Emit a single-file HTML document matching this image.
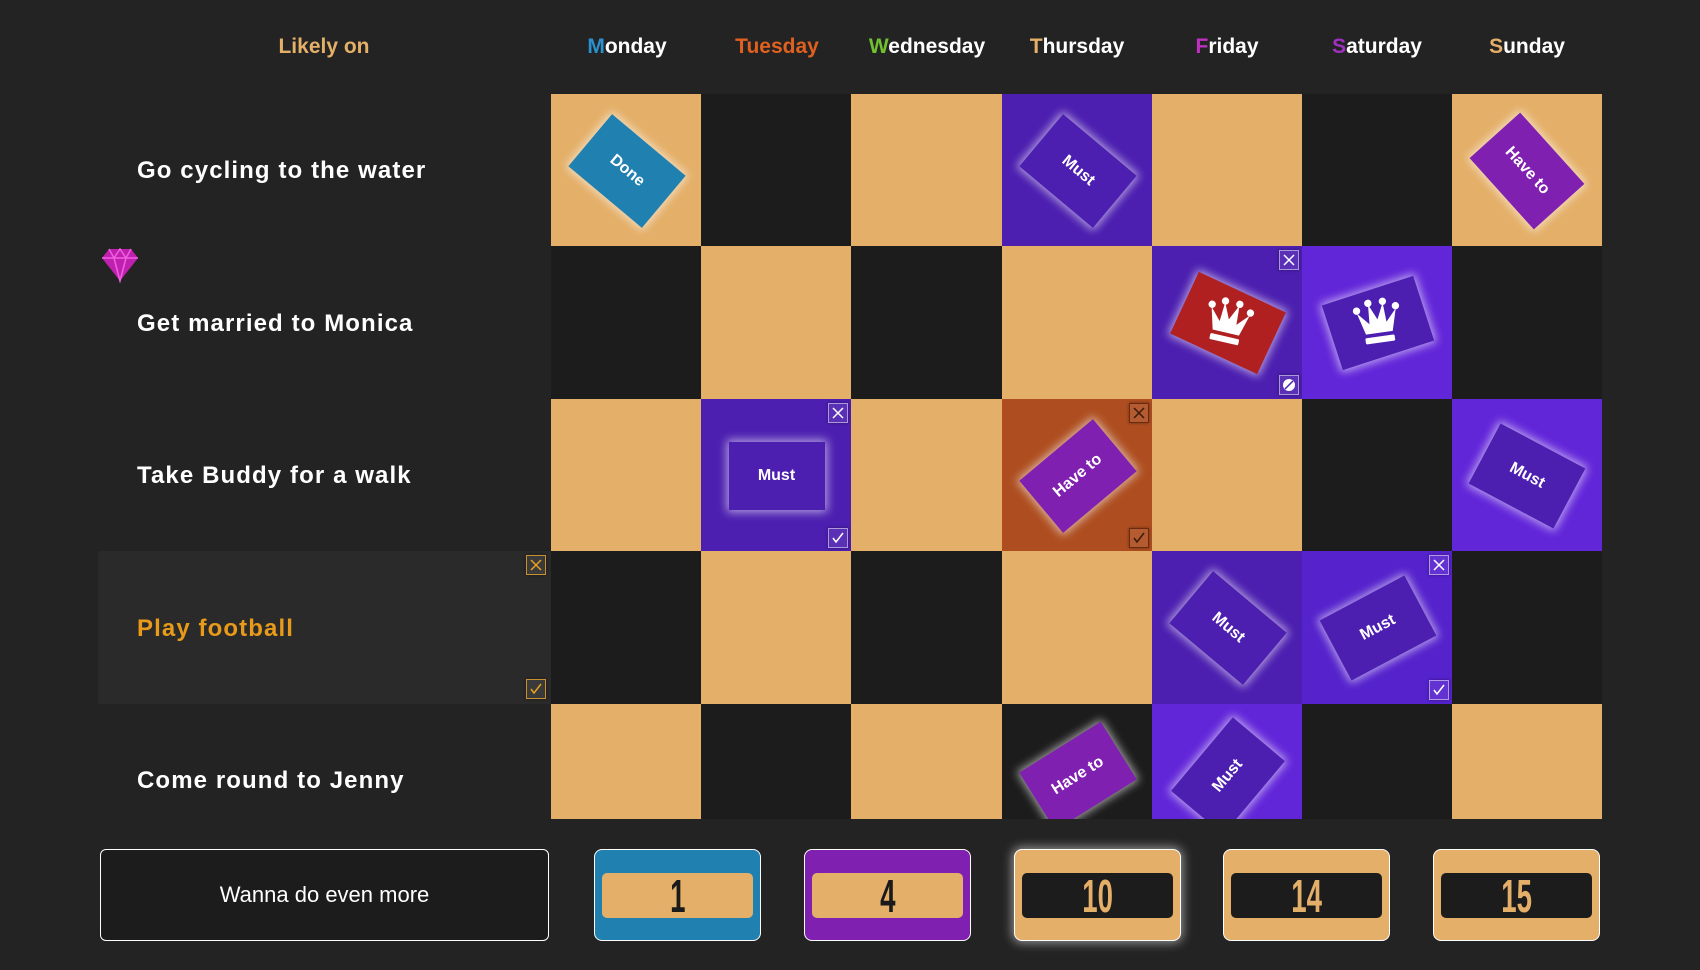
<!DOCTYPE html>
<html><head><style>
body{margin:0;width:1700px;height:970px;background:#232323;font-family:"Liberation Sans",sans-serif;position:relative;overflow:hidden}
.a{position:absolute}
.h{position:absolute;top:35px;font-size:21px;font-weight:bold;color:#fff;transform:translateX(-50%);white-space:nowrap}
.lbl{position:absolute;left:137px;font-size:24px;font-weight:bold;color:#fff;letter-spacing:1.1px}
.c{position:absolute;width:151px;height:153px;overflow:hidden}
.t{background:#e4af68}.d{background:#1c1c1c}.p{background:#4c1fb0}.b{background:#6226d9}.o{background:#ae4e20}
.card{position:absolute;left:50%;top:50%;width:96px;height:68px;margin:-34px 0 0 -48px;box-shadow:0 0 9px 2px rgba(255,255,255,.6);color:#fff;font-weight:bold;font-size:16px;display:flex;align-items:center;justify-content:center}
.must{background:#4c1fb0}.have{background:#8020b0}.done{background:#2080b0}.red{background:#b02020}
.btn{position:absolute;right:4px;width:20px;height:20px;border:1px solid rgba(255,255,255,.5);box-sizing:border-box;background:rgba(255,255,255,.08);box-shadow:0 0 3px rgba(0,0,0,.4)}
.btn svg{display:block}
.nb{position:absolute;top:849px;width:167px;height:92px;border-radius:8px;box-sizing:border-box;border:1px solid #fff}
.nb div{position:absolute;left:7px;right:7px;top:23px;height:45px;border-radius:5px;display:flex;align-items:center;justify-content:center}
.nb span{font-family:"Liberation Sans",sans-serif;font-weight:bold;font-size:46px;transform:scaleX(.6);display:inline-block;line-height:1}
</style></head><body>

<div class="h" style="left:324px;color:#e4af68">Likely on</div>
<div class="h" style="left:627px"><span style="color:#2a90d0">M</span>onday</div>
<div class="h" style="left:777px;color:#e06020">Tuesday</div>
<div class="h" style="left:927px"><span style="color:#70c030">W</span>ednesday</div>
<div class="h" style="left:1077px"><span style="color:#e4af68">T</span>hursday</div>
<div class="h" style="left:1227px"><span style="color:#c030c0">F</span>riday</div>
<div class="h" style="left:1377px"><span style="color:#a030c0">S</span>aturday</div>
<div class="h" style="left:1527px"><span style="color:#e4af68">S</span>unday</div>

<div class="a" style="left:98px;top:551px;width:453px;height:153px;background:#2a2a2a"></div>
<div class="lbl" style="top:157px">Go cycling to the water</div>
<div class="lbl" style="top:310px">Get married to Monica</div>
<div class="lbl" style="top:462px">Take Buddy for a walk</div>
<div class="lbl" style="top:615px;color:#e89a1a">Play football</div>
<div class="lbl" style="top:767px">Come round to Jenny</div>
<svg class="a" style="left:101px;top:247px" width="38" height="36" viewBox="0 0 38 36"><path d="M8 2h22l7 9L19 34 1 11z" fill="#c020b0"/><path d="M1 11h36M8 2l5 9 6 23 6-23 5-9M13 11l6-9 6 9" stroke="#f060e0" stroke-width="1.5" fill="none"/></svg>
<div class="btn" style="left:526px;top:555px;border-color:#c89030"><svg width="18" height="18"><path d="M4 4l10 10M14 4L4 14" stroke="#e8a020" stroke-width="1.5"/></svg></div>
<div class="btn" style="left:526px;top:679px;border-color:#c89030"><svg width="18" height="18"><path d="M4 9l3 4 7-9" stroke="#e8a020" stroke-width="1.5" fill="none"/></svg></div>

<!-- row1 -->
<div class="c t" style="left:551px;top:94px"><div class="card done" style="transform:rotate(40deg)">Done</div></div>
<div class="c d" style="left:701px;top:94px"></div>
<div class="c t" style="left:851px;top:94px"></div>
<div class="c p" style="left:1002px;top:94px"><div class="card must" style="transform:rotate(40deg)">Must</div></div>
<div class="c t" style="left:1152px;top:94px"></div>
<div class="c d" style="left:1302px;top:94px"></div>
<div class="c t" style="left:1452px;top:94px;width:150px"><div class="card have" style="transform:rotate(48deg)">Have to</div></div>
<!-- row2 -->
<div class="c d" style="left:551px;top:246px"></div>
<div class="c t" style="left:701px;top:246px"></div>
<div class="c d" style="left:851px;top:246px"></div>
<div class="c t" style="left:1002px;top:246px"></div>
<div class="c p" style="left:1152px;top:246px"><div class="card red" style="transform:rotate(25deg)"><svg width="60" height="54" viewBox="0 0 48 44" style="transform:rotate(-12deg)"><g fill="#fff"><circle cx="8" cy="10" r="3"/><circle cx="18" cy="5" r="3"/><circle cx="30" cy="5" r="3"/><circle cx="40" cy="10" r="3"/><path d="M8 12l5 18h22l5-18-9 10-1-16-6 13-6-13-1 16z"/><rect x="12" y="33" width="24" height="5" rx="1"/></g></svg></div>
<div class="btn" style="top:4px"><svg width="18" height="18"><path d="M4 4l10 10M14 4L4 14" stroke="#fff" stroke-width="1.5"/></svg></div>
<div class="btn" style="bottom:4px"><svg width="18" height="18"><circle cx="9" cy="9" r="6" fill="#fff"/><path d="M5 13l8-8" stroke="#4c1fb0" stroke-width="1.5"/></svg></div></div>
<div class="c b" style="left:1302px;top:246px"><div class="card must" style="transform:rotate(-18deg)"><svg width="60" height="54" viewBox="0 0 48 44" style="transform:rotate(10deg)"><g fill="#fff"><circle cx="8" cy="10" r="3"/><circle cx="18" cy="5" r="3"/><circle cx="30" cy="5" r="3"/><circle cx="40" cy="10" r="3"/><path d="M8 12l5 18h22l5-18-9 10-1-16-6 13-6-13-1 16z"/><rect x="12" y="33" width="24" height="5" rx="1"/></g></svg></div></div>
<div class="c d" style="left:1452px;top:246px;width:150px"></div>
<!-- row3 -->
<div class="c t" style="left:551px;top:399px"></div>
<div class="c p" style="left:701px;top:399px"><div class="card must">Must</div>
<div class="btn" style="top:4px"><svg width="18" height="18"><path d="M4 4l10 10M14 4L4 14" stroke="#fff" stroke-width="1.5"/></svg></div>
<div class="btn" style="bottom:4px"><svg width="18" height="18"><path d="M4 9l3 4 7-9" stroke="#fff" stroke-width="1.5" fill="none"/></svg></div></div>
<div class="c t" style="left:851px;top:399px"></div>
<div class="c o" style="left:1002px;top:399px"><div class="card have" style="transform:rotate(-40deg)">Have to</div>
<div class="btn" style="top:4px;border-color:#6a2a10"><svg width="18" height="18"><path d="M4 4l10 10M14 4L4 14" stroke="#3a1a08" stroke-width="1.5"/></svg></div>
<div class="btn" style="bottom:4px;border-color:#6a2a10"><svg width="18" height="18"><path d="M4 9l3 4 7-9" stroke="#3a1a08" stroke-width="1.5" fill="none"/></svg></div></div>
<div class="c t" style="left:1152px;top:399px"></div>
<div class="c d" style="left:1302px;top:399px"></div>
<div class="c b" style="left:1452px;top:399px;width:150px"><div class="card must" style="transform:rotate(28deg)">Must</div></div>
<!-- row4 -->
<div class="c d" style="left:551px;top:551px"></div>
<div class="c t" style="left:701px;top:551px"></div>
<div class="c d" style="left:851px;top:551px"></div>
<div class="c t" style="left:1002px;top:551px"></div>
<div class="c p" style="left:1152px;top:551px"><div class="card must" style="transform:rotate(40deg)">Must</div></div>
<div class="c p" style="left:1302px;top:551px;background:#5522cc"><div class="card must" style="transform:rotate(-28deg)">Must</div>
<div class="btn" style="top:4px"><svg width="18" height="18"><path d="M4 4l10 10M14 4L4 14" stroke="#fff" stroke-width="1.5"/></svg></div>
<div class="btn" style="bottom:4px"><svg width="18" height="18"><path d="M4 9l3 4 7-9" stroke="#fff" stroke-width="1.5" fill="none"/></svg></div></div>
<div class="c d" style="left:1452px;top:551px;width:150px"></div>
<!-- row5 -->
<div class="c t" style="left:551px;top:704px;height:115px"></div>
<div class="c d" style="left:701px;top:704px;height:115px"></div>
<div class="c t" style="left:851px;top:704px;height:115px"></div>
<div class="c d" style="left:1002px;top:704px;height:115px"><div class="card have" style="top:72px;transform:rotate(-32deg)">Have to</div></div>
<div class="c b" style="left:1152px;top:704px;height:115px"><div class="card must" style="top:72px;transform:rotate(-50deg)">Must</div></div>
<div class="c d" style="left:1302px;top:704px;height:115px"></div>
<div class="c t" style="left:1452px;top:704px;height:115px;width:150px"></div>

<!-- bottom -->
<div class="a" style="left:100px;top:849px;width:449px;height:92px;box-sizing:border-box;border:1px solid #fff;border-radius:6px;background:#1c1c1c;color:#fff;font-size:22px;display:flex;align-items:center;justify-content:center">Wanna do even more</div>
<div class="nb" style="left:594px;background:#2080b0"><div style="background:#e4af68;color:#1a1a1a"><span>1</span></div></div>
<div class="nb" style="left:804px;background:#8020b0"><div style="background:#e4af68;color:#1a1a1a"><span>4</span></div></div>
<div class="nb" style="left:1014px;background:#e4af68;box-shadow:0 0 10px 2px rgba(255,255,255,.5)"><div style="background:#1c1c1c;color:#e4af68"><span>10</span></div></div>
<div class="nb" style="left:1223px;background:#e4af68"><div style="background:#1c1c1c;color:#e4af68"><span>14</span></div></div>
<div class="nb" style="left:1433px;background:#e4af68"><div style="background:#1c1c1c;color:#e4af68"><span>15</span></div></div>
</body></html>
